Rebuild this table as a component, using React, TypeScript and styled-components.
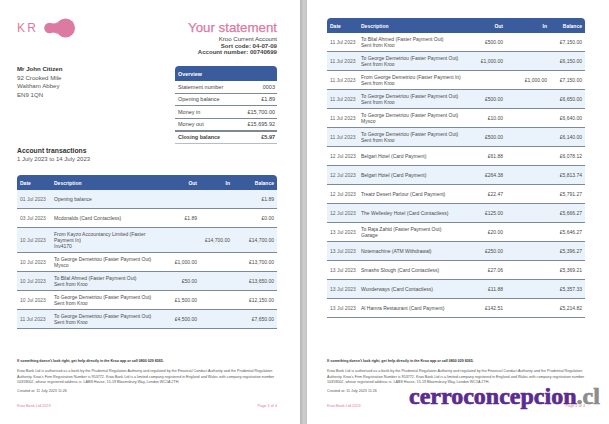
import React from 'react';
import styled, { createGlobalStyle } from 'styled-components';

const GlobalStyle = createGlobalStyle`
  *, *::before, *::after { box-sizing: border-box; }
  html, body { margin: 0; padding: 0; background: #fff; }
  body {
    font-family: "Liberation Sans", Arial, sans-serif;
    color: #3f3f3f;
  }
`;

const PINK = '#dc7aa2';
const BLUE = '#3a5b9c';
const LINE = '#7d8996';
const ZEBRA = '#eaf3fb';

type Txn = { date: string; desc: string[]; out?: string; in?: string; bal: string };

const page1: Txn[] = [
  { date: '01 Jul 2023', desc: ['Opening balance'], bal: '£1.89' },
  { date: '03 Jul 2023', desc: ['Mcdonalds (Card Contactless)'], out: '£1.89', bal: '£0.00' },
  {
    date: '10 Jul 2023',
    desc: ['From Kayzo Accountancy Limited (Faster', 'Payment In)', 'Inv4170'],
    in: '£14,700.00',
    bal: '£14,700.00',
  },
  { date: '10 Jul 2023', desc: ['To George Demetriou (Faster Payment Out)', 'Mysco'], out: '£1,000.00', bal: '£13,700.00' },
  { date: '10 Jul 2023', desc: ['To Bilal Ahmed (Faster Payment Out)', 'Sent from Kroo'], out: '£50.00', bal: '£13,650.00' },
  { date: '10 Jul 2023', desc: ['To George Demetriou (Faster Payment Out)', 'Sent from Kroo'], out: '£1,500.00', bal: '£12,150.00' },
  { date: '11 Jul 2023', desc: ['To George Demetriou (Faster Payment Out)', 'Sent from Kroo'], out: '£4,500.00', bal: '£7,650.00' },
];

const page2: Txn[] = [
  { date: '11 Jul 2023', desc: ['To Bilal Ahmed (Faster Payment Out)', 'Sent from Kroo'], out: '£500.00', bal: '£7,150.00' },
  { date: '11 Jul 2023', desc: ['To George Demetriou (Faster Payment Out)', 'Sent from Kroo'], out: '£1,000.00', bal: '£6,150.00' },
  { date: '11 Jul 2023', desc: ['From George Demetriou (Faster Payment In)', 'Sent from Kroo'], in: '£1,000.00', bal: '£7,150.00' },
  { date: '11 Jul 2023', desc: ['To George Demetriou (Faster Payment Out)', 'Sent from Kroo'], out: '£500.00', bal: '£6,650.00' },
  { date: '11 Jul 2023', desc: ['To George Demetriou (Faster Payment Out)', 'Mysco'], out: '£10.00', bal: '£6,640.00' },
  { date: '11 Jul 2023', desc: ['To George Demetriou (Faster Payment Out)', 'Sent from Kroo'], out: '£500.00', bal: '£6,140.00' },
  { date: '12 Jul 2023', desc: ['Belgari Hotel (Card Payment)'], out: '£61.88', bal: '£6,078.12' },
  { date: '12 Jul 2023', desc: ['Belgari Hotel (Card Payment)'], out: '£264.38', bal: '£5,813.74' },
  { date: '12 Jul 2023', desc: ['Treatz Desert Parlour (Card Payment)'], out: '£22.47', bal: '£5,791.27' },
  { date: '12 Jul 2023', desc: ['The Wellesley Hotel (Card Contactless)'], out: '£125.00', bal: '£5,666.27' },
  { date: '13 Jul 2023', desc: ['To Raja Zahid (Faster Payment Out)', 'Garage'], out: '£20.00', bal: '£5,646.27' },
  { date: '13 Jul 2023', desc: ['Notemachine (ATM Withdrawal)'], out: '£250.00', bal: '£5,396.27' },
  { date: '13 Jul 2023', desc: ['Smashs Slough (Card Contactless)'], out: '£27.06', bal: '£5,369.21' },
  { date: '13 Jul 2023', desc: ['Wunderways (Card Contactless)'], out: '£11.88', bal: '£5,357.33' },
  { date: '13 Jul 2023', desc: ['Al Hamra Restaurant (Card Payment)'], out: '£142.51', bal: '£5,214.82' },
];

const Viewer = styled.div`
  position: relative;
  display: flex;
  width: 609px;
  height: 424px;
  overflow: hidden;
`;

const Gutter = styled.div`
  flex: none;
  width: 7px;
  background: linear-gradient(to right, #b4b4b4, #cfcfcf 55%, #c2c2c2);
`;

const Page = styled.div<{ $w: number; $pl: number; $pr: number }>`
  flex: none;
  width: ${p => p.$w}px;
  height: 424px;
  padding: 18px ${p => p.$pr}px 15px ${p => p.$pl}px;
  display: flex;
  flex-direction: column;
  background: #fff;
`;

/* ---------- statement header ---------- */

const HeaderRow = styled.div`
  display: flex;
  justify-content: space-between;
`;

const LeftCol = styled.div`
  display: flex;
  flex-direction: column;
`;

const Logo = styled.div`
  display: flex;
  align-items: center;
  height: 20px;
`;

const LogoText = styled.span`
  font-size: 12px;
  letter-spacing: 2.2px;
  color: ${PINK};
  line-height: 1;
`;

const Address = styled.div`
  margin-top: 27px;
  font-size: 6.1px;
  line-height: 8.5px;
  color: #555;
`;

const Name = styled.div`
  font-weight: bold;
  color: #333;
`;

const RightCol = styled.div`
  width: 102px;
  padding-top: 2px;
  display: flex;
  flex-direction: column;
  align-items: flex-end;
`;

const Title = styled.div`
  font-size: 13.3px;
  line-height: 16px;
  color: ${PINK};
  -webkit-text-stroke: 0.25px ${PINK};
  white-space: nowrap;
`;

const Meta = styled.div<{ $bold?: boolean }>`
  font-size: 6.1px;
  line-height: 6.5px;
  font-weight: ${p => (p.$bold ? 'bold' : 'normal')};
  color: #444;
  white-space: nowrap;
`;

const Overview = styled.div`
  align-self: stretch;
  margin-top: 10.5px;
`;

const OverviewHead = styled.div`
  height: 15px;
  display: flex;
  align-items: center;
  padding-left: 3px;
  background: ${BLUE};
  border-radius: 4px 4px 0 0;
  color: #fff;
  font-weight: bold;
  font-size: 5.4px;
`;

const OverviewRow = styled.div<{ $strong?: boolean }>`
  height: 12.5px;
  display: flex;
  align-items: center;
  justify-content: space-between;
  padding: 0 2px 0 3px;
  font-size: 5.5px;
  font-weight: ${p => (p.$strong ? 'bold' : 'normal')};
  color: #444;
  border-top: ${p => (p.$strong ? `1px solid ${LINE}` : 'none')};
  border-bottom: 1px solid ${p => (p.$strong ? '#b5bec7' : LINE)};
`;

const SectionTitle = styled.div`
  margin-top: 2px;
  font-size: 6.8px;
  line-height: 10px;
  font-weight: bold;
  color: #333;
`;

const SectionSub = styled.div`
  font-size: 6px;
  line-height: 7px;
  color: #555;
`;

/* ---------- transactions table ---------- */

const Table = styled.div<{ $mt: number }>`
  margin-top: ${p => p.$mt}px;
`;

const Head = styled.div<{ $cols: string }>`
  display: grid;
  grid-template-columns: ${p => p.$cols};
  align-items: center;
  height: 15px;
  background: ${BLUE};
  border-radius: 4px 4px 0 0;
  color: #fff;
  font-weight: bold;
  font-size: 5px;
`;

const Row = styled.div<{ $cols: string; $zebra: boolean }>`
  display: grid;
  grid-template-columns: ${p => p.$cols};
  align-items: center;
  min-height: 19px;
  padding: 3px 0;
  background: ${p => (p.$zebra ? ZEBRA : '#fff')};
  border-bottom: 1px solid ${LINE};
  font-size: 5px;
  line-height: 6px;
  color: #4a4a4a;
`;

const Cell = styled.div<{ $right?: boolean }>`
  padding: ${p => (p.$right ? '0 3px 0 0' : '0 0 0 3px')};
  text-align: ${p => (p.$right ? 'right' : 'left')};
  white-space: nowrap;
`;

const DateCell = styled(Cell)`
  color: #666;
`;

function Transactions({ rows, cols, start, mt }: { rows: Txn[]; cols: string; start: number; mt: number }) {
  return (
    <Table $mt={mt}>
      <Head $cols={cols}>
        <Cell>Date</Cell>
        <Cell>Description</Cell>
        <Cell $right>Out</Cell>
        <Cell $right>In</Cell>
        <Cell $right>Balance</Cell>
      </Head>
      {rows.map((r, i) => (
        <Row key={i} $cols={cols} $zebra={(i + start) % 2 === 0}>
          <DateCell>{r.date}</DateCell>
          <Cell>
            {r.desc.map((d, j) => (
              <div key={j}>{d}</div>
            ))}
          </Cell>
          <Cell $right>{r.out ?? ''}</Cell>
          <Cell $right>{r.in ?? ''}</Cell>
          <Cell $right>{r.bal}</Cell>
        </Row>
      ))}
    </Table>
  );
}

/* ---------- footer ---------- */

const Footer = styled.div`
  margin-top: auto;
  color: #555;
`;

const Help = styled.div`
  font-size: 3.6px;
  line-height: 5px;
  font-weight: bold;
  color: #333;
  white-space: nowrap;
`;

const Legal = styled.div`
  margin-top: 5px;
  font-size: 3.7px;
  line-height: 5.2px;
`;

const Created = styled.div`
  margin-top: 4px;
  font-size: 3.7px;
  line-height: 5px;
`;

const BottomBar = styled.div`
  margin-top: 10px;
  display: flex;
  justify-content: space-between;
  font-size: 3.8px;
  line-height: 5px;
  color: ${PINK};
`;

function PageFooter({ page }: { page: number }) {
  return (
    <Footer>
      <Help>If something doesn't look right, get help directly in the Kroo app or call 0800 029 8265.</Help>
      <Legal>
        Kroo Bank Ltd is authorised as a bank by the Prudential Regulation Authority and regulated by the Financial
        Conduct Authority and the Prudential Regulation Authority. Kroo's Firm Registration Number is 953772. Kroo Bank
        Ltd is a limited company registered in England and Wales with company registration number 10359002, whose
        registered address is: LABS House, 15-19 Bloomsbury Way, London WC1A 2TH.
      </Legal>
      <Created>Created at: 11 July 2023 11:26</Created>
      <BottomBar>
        <span>Kroo Bank Ltd 2023</span>
        <span>Page {page} of 4</span>
      </BottomBar>
    </Footer>
  );
}

const Watermark = styled.div`
  position: absolute;
  left: 409px;
  top: 384px;
  font-family: "Liberation Serif", "Times New Roman", serif;
  font-weight: bold;
  font-size: 24px;
  line-height: 1;
  color: #5b2c8f;
  -webkit-text-stroke: 0.7px #5b2c8f;
  white-space: nowrap;
`;

const WatermarkTld = styled.span`
  color: #8c8c8c;
  -webkit-text-stroke: 0.7px #8c8c8c;
`;

function KrooMark() {
  return (
    <svg width="32" height="20" viewBox="0 0 32 20" style={{ marginLeft: 6 }}>
      <circle cx="5.5" cy="10" r="5.3" fill={PINK} />
      <circle cx="21.5" cy="10" r="9.5" fill={PINK} />
      <path d="M5.5 4.9 Q10.5 6.5 13.5 4 L13.5 16 Q10.5 13.5 5.5 15.1 Z" fill={PINK} />
    </svg>
  );
}

const LEFT_COLS = '34px 104px 45px 33px 1fr';
const RIGHT_COLS = '31px 102px 46px 44px 1fr';

export default function App() {
  return (
    <>
      <GlobalStyle />
      <Viewer>
        <Page $w={300} $pl={17} $pr={23}>
          <HeaderRow>
            <LeftCol>
              <Logo>
                <LogoText>KR</LogoText>
                <KrooMark />
              </Logo>
              <Address>
                <Name>Mr John Citizen</Name>
                <div>92 Crooked Mile</div>
                <div>Waltham Abbey</div>
                <div>EN9 1QN</div>
              </Address>
            </LeftCol>
            <RightCol>
              <Title>Your statement</Title>
              <Meta>Kroo Current Account</Meta>
              <Meta $bold>Sort code: 04-07-09</Meta>
              <Meta $bold>Account number: 00740699</Meta>
              <Overview>
                <OverviewHead>Overview</OverviewHead>
                <OverviewRow>
                  <span>Statement number</span>
                  <span>0003</span>
                </OverviewRow>
                <OverviewRow>
                  <span>Opening balance</span>
                  <span>£1.89</span>
                </OverviewRow>
                <OverviewRow>
                  <span>Money in</span>
                  <span>£15,700.00</span>
                </OverviewRow>
                <OverviewRow>
                  <span>Money out</span>
                  <span>£15,695.92</span>
                </OverviewRow>
                <OverviewRow $strong>
                  <span>Closing balance</span>
                  <span>£5.97</span>
                </OverviewRow>
              </Overview>
            </RightCol>
          </HeaderRow>
          <SectionTitle>Account transactions</SectionTitle>
          <SectionSub>1 July 2023 to 14 July 2023</SectionSub>
          <Transactions rows={page1} cols={LEFT_COLS} start={0} mt={12.5} />
          <PageFooter page={1} />
        </Page>
        <Gutter />
        <Page $w={302} $pl={20} $pr={24}>
          <Transactions rows={page2} cols={RIGHT_COLS} start={1} mt={0} />
          <PageFooter page={2} />
        </Page>
        <Watermark>
          cerroconcepcion<WatermarkTld>.cl</WatermarkTld>
        </Watermark>
      </Viewer>
    </>
  );
}
